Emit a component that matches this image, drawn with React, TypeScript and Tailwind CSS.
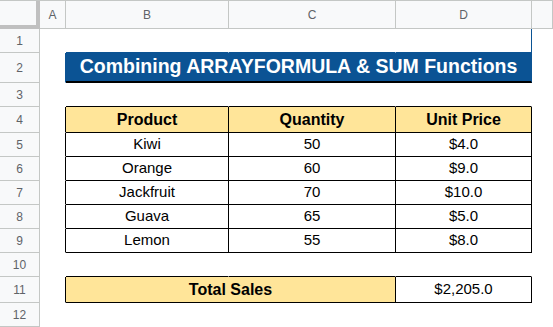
import React from "react";

const W = { rh: "w-[40px]", a: "w-[26px]", b: "w-[163px]", c: "w-[167px]", d: "w-[136px]", e: "w-[21px]" };

function Cell({ className = "", children }: { className?: string; children?: React.ReactNode }) {
  return (
    <div className={`shrink-0 box-border flex items-center justify-center border-r border-b border-transparent ${className}`}>
      {children}
    </div>
  );
}

function RowHead({ n }: { n: number }) {
  return (
    <Cell className={`${W.rh} h-full bg-[#f8f9fa] !border-r-[#c4c7c5] !border-b-[#c4c7c5] text-[12px] text-[#5f6368]`}>
      {n}
    </Cell>
  );
}

const data = [
  ["Kiwi", "50", "$4.0"],
  ["Orange", "60", "$9.0"],
  ["Jackfruit", "70", "$10.0"],
  ["Guava", "65", "$5.0"],
  ["Lemon", "55", "$8.0"],
];

export default function App() {
  return (
    <div
      className="w-[553px] h-[327px] overflow-hidden bg-white text-black"
      style={{ fontFamily: '"Liberation Sans", Arial, sans-serif' }}
    >
      {/* column header */}
      <div className="flex h-[29px] border-t border-[#c4c7c5]">
        <div className="w-[40px] h-full shrink-0 box-border bg-[#f8f9fa] border-r-4 border-b-4 border-[#c0c0c0]" />
        {[
          [W.a, "A"],
          [W.b, "B"],
          [W.c, "C"],
          [W.d, "D"],
          [W.e, ""],
        ].map(([w, l], i) => (
          <Cell
            key={i}
            className={`${w} h-full bg-[#f8f9fa] !border-r-[#c4c7c5] !border-b-[#c4c7c5] text-[12px] text-[#5f6368]`}
          >
            {l}
          </Cell>
        ))}
      </div>

      {/* row 1 */}
      <div className="flex h-[24px]">
        <RowHead n={1} />
        <Cell className={`${W.a} h-full`} />
        <Cell className={`${W.b} h-full !border-b-[#0b5394]`} />
        <Cell className={`${W.c} h-full !border-b-[#0b5394]`} />
        <Cell className={`${W.d} h-full !border-b-[#0b5394] !border-r-[#0b5394]`} />
      </div>

      {/* row 2 title */}
      <div className="flex h-[30px]">
        <RowHead n={2} />
        <Cell className={`${W.a} h-full !border-r-[#0b5394]`} />
        <Cell className="w-[466px] h-full bg-[#0b5394] !border-r-[#0b5394] !border-b-2 !border-b-black text-white font-bold text-[19.5px]">
          Combining ARRAYFORMULA &amp; SUM Functions
        </Cell>
      </div>

      {/* row 3 */}
      <div className="flex h-[24px]">
        <RowHead n={3} />
        <Cell className={`${W.a} h-full`} />
        <Cell className={`${W.b} h-full !border-b-black`} />
        <Cell className={`${W.c} h-full !border-b-black`} />
        <Cell className={`${W.d} h-full !border-b-black`} />
      </div>

      {/* row 4 header */}
      <div className="flex h-[26px]">
        <RowHead n={4} />
        <Cell className={`${W.a} h-full !border-r-black`} />
        {[
          [W.b, "Product"],
          [W.c, "Quantity"],
          [W.d, "Unit Price"],
        ].map(([w, t], i) => (
          <Cell key={i} className={`${w} h-full bg-[#ffe599] !border-r-black !border-b-black font-bold text-[16px]`}>
            {t}
          </Cell>
        ))}
      </div>

      {data.map((r, i) => (
        <div key={i} className="flex h-[24px]">
          <RowHead n={5 + i} />
          <Cell className={`${W.a} h-full !border-r-black`} />
          <Cell className={`${W.b} h-full !border-r-black !border-b-black text-[15px]`}>{r[0]}</Cell>
          <Cell className={`${W.c} h-full !border-r-black !border-b-black text-[15px]`}>{r[1]}</Cell>
          <Cell className={`${W.d} h-full !border-r-black !border-b-black text-[15px]`}>{r[2]}</Cell>
        </div>
      ))}

      {/* row 10 */}
      <div className="flex h-[24px]">
        <RowHead n={10} />
        <Cell className={`${W.a} h-full`} />
        <Cell className={`${W.b} h-full !border-b-black`} />
        <Cell className={`${W.c} h-full !border-b-black`} />
        <Cell className={`${W.d} h-full !border-b-black`} />
      </div>

      {/* row 11 */}
      <div className="flex h-[26px]">
        <RowHead n={11} />
        <Cell className={`${W.a} h-full !border-r-black`} />
        <Cell className="w-[330px] h-full bg-[#ffe599] !border-r-black !border-b-black font-bold text-[16px]">
          Total Sales
        </Cell>
        <Cell className={`${W.d} h-full !border-r-black !border-b-black text-[15px]`}>$2,205.0</Cell>
      </div>

      {/* row 12 */}
      <div className="flex h-[24px]">
        <RowHead n={12} />
      </div>
    </div>
  );
}
